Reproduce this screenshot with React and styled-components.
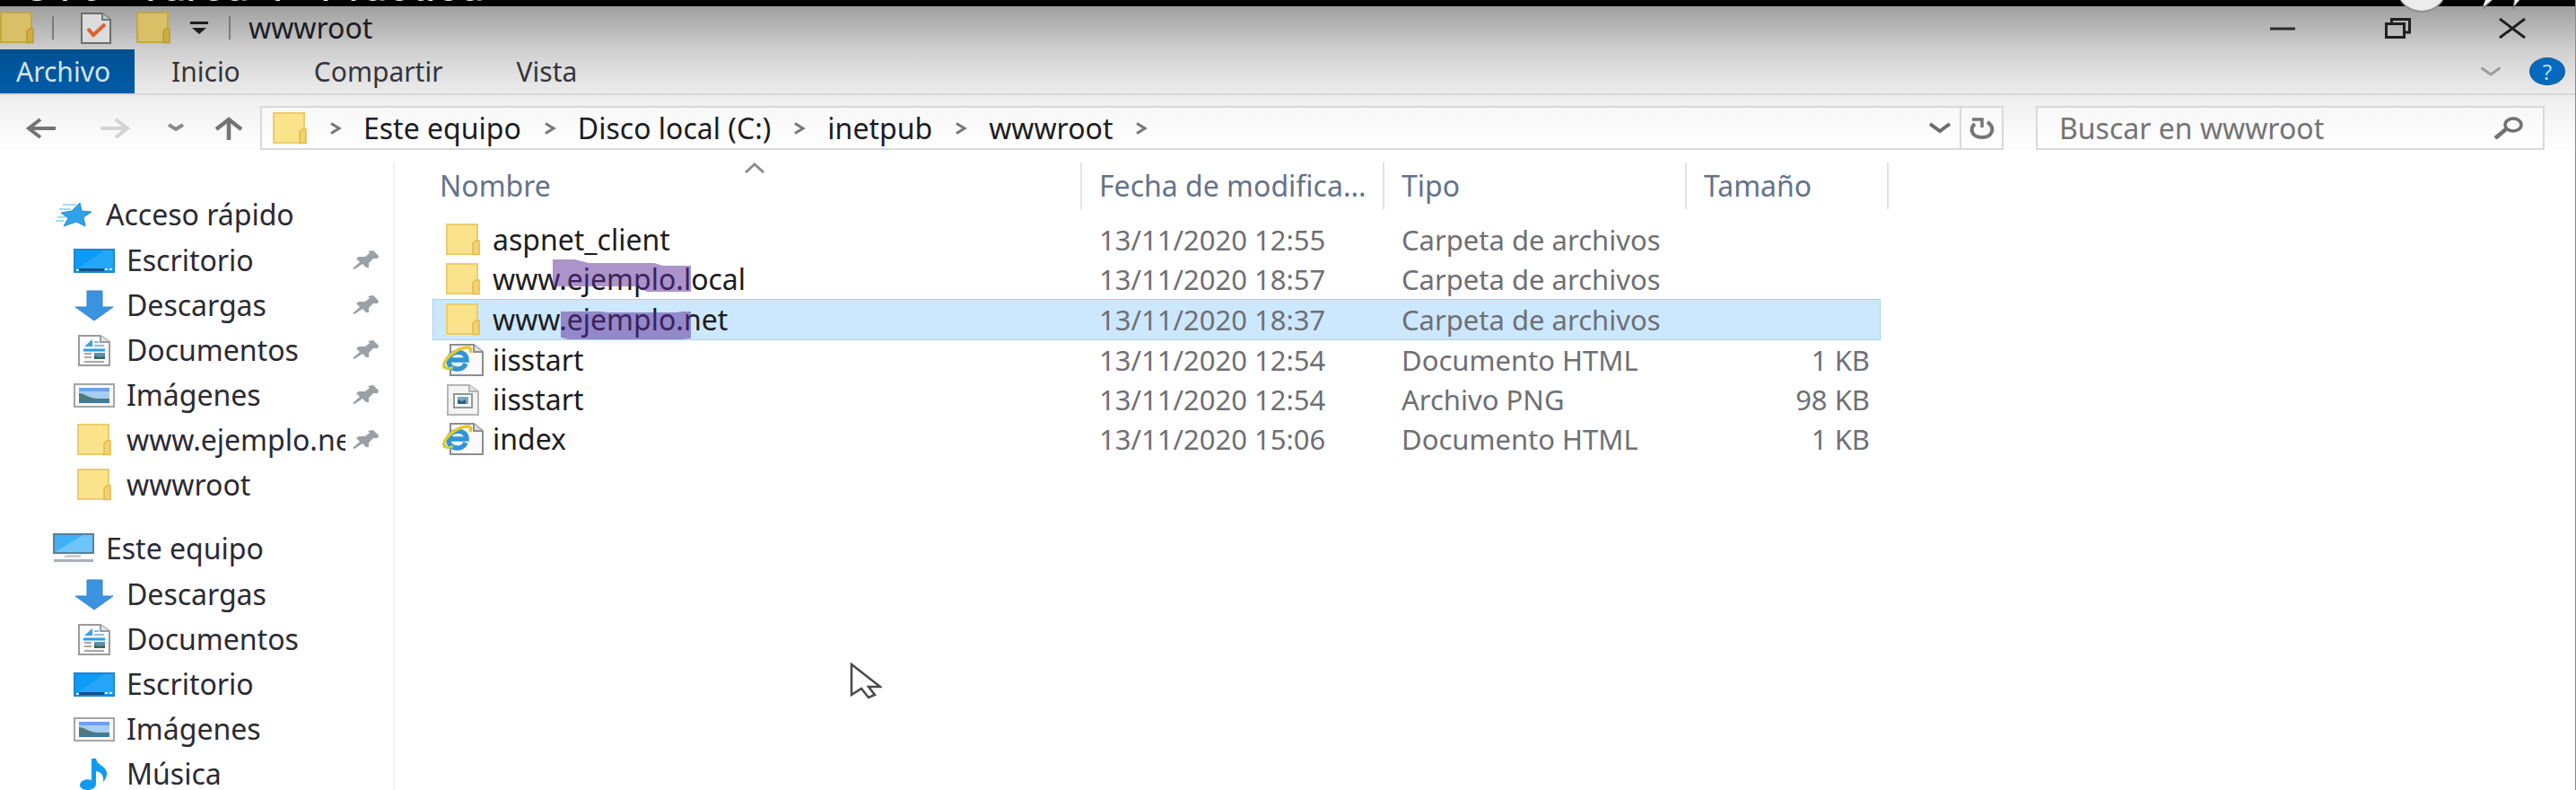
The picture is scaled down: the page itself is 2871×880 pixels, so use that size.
import React from "react";
import styled, { createGlobalStyle, css } from "styled-components";

const GlobalStyle = createGlobalStyle`
  * { box-sizing: border-box; }
  body {
    margin: 0;
    background: #fff;
    color: #1c1c24;
    font-family: "Noto Sans", "Open Sans", sans-serif;
    font-size: 32px;
    line-height: 44px;
  }
  button, input { font: inherit; color: inherit; }
  svg { display: block; flex: none; }
`;

/* ---------- layout ---------- */

const Page = styled.div`
  position: relative;
  display: flex;
  flex-direction: column;
  height: 100vh;
  overflow: hidden;
  border-right: 1px solid #8a8a8a;
`;

const VideoStrip = styled.div`
  display: flex;
  align-items: flex-end;
  flex: none;
  height: 7px;
  padding-left: 25px;
  overflow: hidden;
  background: #000;
`;

const VideoTitle = styled.span`
  color: #eceff0;
  font: 50px/46px Roboto, sans-serif;
  white-space: nowrap;
`;

const VideoControls = styled.svg`
  position: absolute;
  top: 0;
  right: 55px;
`;

const Chrome = styled.header`
  flex: none;
  background: linear-gradient(#9f9f9f 0, #b7b7b7 24px, #d0d0d0 50px, #e0e0e0 74px, #ececec 98px, #f2f2f2 112px, #fcfcfc 150px, #fff 173px);
`;

const TitleBar = styled.div`
  display: flex;
  align-items: center;
  height: 48px;
`;

const QuickAccess = styled.div`
  display: flex;
  align-items: center;
  height: 48px;
`;

const Separator = styled.span`
  width: 2px;
  height: 26px;
  background: #7b7b7b;
  margin-left: ${(p) => p.$before}px;
  margin-right: ${(p) => p.$after}px;
`;

const PlainButton = styled.button`
  display: flex;
  align-items: center;
  justify-content: center;
  padding: 0;
  border: 0;
  background: none;
`;

const ToolButton = styled(PlainButton)`
  margin-right: ${(p) => p.$after || 0}px;
`;

const WindowTitle = styled.h1`
  margin: 0;
  font-size: 32px;
  font-weight: 400;
  line-height: 44px;
`;

const WindowButtons = styled.div`
  display: flex;
  margin-left: auto;
  padding-right: 6px;
`;

const WindowButton = styled(PlainButton)`
  width: 128px;
  height: 42px;
`;

const Ribbon = styled.nav`
  display: flex;
  align-items: stretch;
  height: 51px;
  border-bottom: 2px solid #d7d7d7;
`;

const Tab = styled(PlainButton)`
  padding: 0 41px;
  font-size: 30px;
  color: #35343c;
  ${(p) =>
    p.$active &&
    css`
      padding: 0 27px 0 18px;
      color: #d5e4f2;
      background: linear-gradient(#00508f, #005cab);
    `}
`;

const RibbonEnd = styled.div`
  display: flex;
  align-items: center;
  gap: 31px;
  margin-left: auto;
  padding-right: 11px;
`;

const HelpButton = styled.button`
  width: 40px;
  height: 31px;
  padding: 0;
  border: 1px solid #1d5c93;
  border-radius: 50%;
  background: #0569c0;
  color: #b9dcf8;
  font-size: 24px;
  line-height: 28px;
  text-align: center;
`;

const NavBar = styled.div`
  display: flex;
  align-items: center;
  padding: 12px 34px 0 28px;
`;

const NavButtons = styled.div`
  display: flex;
  align-items: center;
  width: 262px;
`;

const Box = styled.div`
  display: flex;
  align-items: center;
  height: 49px;
  border: 2px solid #d9d9d9;
  background: rgba(255, 255, 255, 0.45);
`;

const AddressBar = styled(Box)`
  flex: 1;
  margin-right: 36px;
`;

const Crumbs = styled.div`
  display: flex;
  align-items: center;
  flex: 1;
  gap: 24px;
  padding-left: 12px;
`;

const Crumb = styled(PlainButton)`
  white-space: nowrap;
`;

const RefreshButton = styled(PlainButton)`
  align-self: stretch;
  width: 47px;
  margin-left: 9px;
  border-left: 2px solid #d9d9d9;
`;

const SearchBox = styled(Box)`
  width: 567px;
  padding: 0 22px 0 24px;
`;

const SearchInput = styled.input`
  flex: 1;
  min-width: 0;
  padding: 0;
  border: 0;
  outline: 0;
  background: none;
  &::placeholder { color: #747474; opacity: 1; }
`;

const Body = styled.div`
  display: flex;
  flex: 1;
  min-height: 0;
  padding-top: 14px;
`;

const Sidebar = styled.aside`
  flex: none;
  width: 440px;
  padding-top: 32px;
  border-right: 2px solid #f3f3f3;
`;

const Group = styled.ul`
  margin: 0 0 20px;
  padding: 0;
  list-style: none;
`;

const SideRow = styled.a`
  display: flex;
  align-items: center;
  height: ${(p) => (p.$head ? 52 : 50)}px;
  padding-left: ${(p) => (p.$head ? 58 : 81)}px;
  padding-right: 15px;
  color: #2a2a33;
  text-decoration: none;
`;

const SideIcon = styled.span`
  display: flex;
  justify-content: center;
  flex: none;
  width: 48px;
  margin-right: 12px;
`;

const SideLabel = styled.span`
  flex: 1;
  min-width: 0;
  margin-right: 8px;
  overflow: ${(p) => (p.$clip ? "hidden" : "visible")};
  white-space: nowrap;
`;

const Files = styled.main`
  flex: 1;
  padding-left: 42px;
`;

const FileTable = styled.table`
  width: 1623px;
  table-layout: fixed;
  border-collapse: separate;
  border-spacing: 0;
  tbody::before { content: ""; display: block; height: 12px; }
`;

const HeadCell = styled.th`
  position: relative;
  height: 52px;
  padding: 0 0 0 ${(p) => (p.$first ? 8 : 19)}px;
  border-right: 2px solid #e2e2e2;
  font-weight: 400;
  text-align: left;
`;

const HeadButton = styled(PlainButton)`
  white-space: nowrap;
  color: #65728a;
`;

const SortMark = styled.svg`
  position: absolute;
  top: 0;
  left: 348px;
`;

const Cell = styled.td`
  height: ${(p) => (p.$selected ? 46 : 44)}px;
  padding: 0 ${(p) => (p.$right ? 12 : 0)}px 0 19px;
  color: #6f6f74;
  font-size: 31px;
  text-align: ${(p) => (p.$right ? "right" : "left")};
  white-space: nowrap;
  ${(p) =>
    p.$selected &&
    css`
      background: #cce8ff;
      border: solid #a5d3f5;
      border-width: 1px 0;
      &:nth-child(4) { border-right-width: 1px; }
    `}
`;

const NameCell = styled(Cell)`
  padding: 0;
  color: #1c1c20;
  font-size: 32px;
  ${(p) => p.$selected && css`box-shadow: inset 1px 0 #a5d3f5;`}
`;

const NameRow = styled.div`
  display: flex;
  align-items: center;
`;

const FileIcon = styled.span`
  display: flex;
  justify-content: center;
  width: 48px;
  margin: 0 9px 0 10px;
`;

const FileName = styled.span`
  position: relative;
`;

const Marker = styled.svg`
  position: absolute;
  left: 67px;
  top: 0;
`;

const Pointer = styled.svg`
  position: absolute;
  left: 947px;
  top: 738px;
`;

/* ---------- icons ---------- */

const Folder = ({ dim }) => (
  <svg width="38" height="36" viewBox="0 0 38 36" aria-hidden="true">
    <rect x="1" y="1" width="34" height="33" fill={dim ? "#d9c067" : "#fbe38c"} stroke={dim ? "#c2a745" : "#eccd6a"} strokeWidth="2" />
    <path d="M30 34.500V22l3-3h4v15.500z" fill={dim ? "#cfae3f" : "#f3d36b"} stroke={dim ? "#b99a35" : "#dfbb4f"} strokeWidth="1.5" />
  </svg>
);

const Check = () => (
  <svg width="34" height="35" viewBox="0 0 34 35" aria-hidden="true">
    <path d="M1 1h23l9 7v26H1z" fill="#dcdcdc" stroke="#6d6d6d" strokeWidth="2" />
    <path d="M24 1v7h9" fill="#bcc" stroke="#6d7878" strokeWidth="2" />
    <path d="M8 18l6 7 13-12" fill="none" stroke="#dd6330" strokeWidth="4" />
  </svg>
);

const Chevron = ({ w = 20, h = 10, dir = "down", color = "#757575", sw = 3 }) => {
  const a = sw;
  const d = {
    down: `M${a / 2} ${a / 2}L${w / 2} ${h - a}L${w - a / 2} ${a / 2}`,
    right: `M${a} ${a / 2}L${w - a} ${h / 2}L${a} ${h - a / 2}`,
  }[dir];
  return (
    <svg width={w} height={h} viewBox={`0 0 ${w} ${h}`} aria-hidden="true">
      <path d={d} fill="none" stroke={color} strokeWidth={sw} />
    </svg>
  );
};

const CrumbArrow = () => <Chevron w={15} h={14} dir="right" color="#777" sw={3} />;

const Arrow = ({ dir, color }) => {
  const d = {
    left: "M34 12H4M17 2L4 12l13 10",
    right: "M0 12h30M17 2l13 10-13 10",
  }[dir];
  return (
    <svg width="34" height="24" viewBox="0 0 34 24" aria-hidden="true">
      <path d={d} fill="none" stroke={color} strokeWidth="4" />
    </svg>
  );
};

const UpArrow = () => (
  <svg width="34" height="26" viewBox="0 0 34 26" aria-hidden="true">
    <path d="M17 26V4M3 14L17 3l14 11" fill="none" stroke="#747474" strokeWidth="4.5" />
  </svg>
);

const Star = () => (
  <svg width="42" height="28" viewBox="0 0 42 28" aria-hidden="true">
    <path d="M9 3h15M5 8h13M3 17h9M1 21h9" stroke="#a5d8f5" strokeWidth="2" />
    <path d="M28 1l2 9 11 1-9 6 2 10-10-5-14 5 5-9-8-6 12-2z" fill="#2fa3ea" stroke="#2489cc" />
  </svg>
);

const Desktop = () => (
  <svg width="46" height="27" viewBox="0 0 46 27" aria-hidden="true">
    <rect x="1" y="1" width="44" height="25" fill="#0c9bf5" stroke="#1f86d0" strokeWidth="2" />
    <path d="M2 24L34 2h10v22z" fill="#26a6f8" />
    <path d="M6 23.500h28" stroke="#125083" strokeWidth="3" />
    <path d="M3 24h3M35 23h3M40 23h3" stroke="#d4efff" strokeWidth="2" />
  </svg>
);

const Download = () => (
  <svg width="44" height="35" viewBox="0 0 44 35" aria-hidden="true">
    <path d="M14 1h17v18h12L22 34 1 19h13z" fill="#3b93df" stroke="#3384cf" />
  </svg>
);

const Document = () => (
  <svg width="36" height="35" viewBox="0 0 36 35" aria-hidden="true">
    <path d="M1 1h24l10 7v26H1z" fill="#fbfbfb" stroke="#9c9c9c" strokeWidth="2" />
    <path d="M25 1v7h10" fill="#e7e7e7" stroke="#9c9c9c" strokeWidth="2" />
    <path d="M7 13l9-8v8z" fill="#3c9fe0" />
    <path d="M18 8h5M18 12h11" stroke="#8bbfe4" strokeWidth="2" />
    <path d="M6 17h24" stroke="#2b9be6" strokeWidth="3" />
    <path d="M7 21h8M7 25h8M7 30h22" stroke="#a7a7a7" strokeWidth="2" />
    <rect x="18" y="20" width="12" height="7" fill="#5b8fb0" />
    <path d="M18 27v-4l6 2 6-1v3z" fill="#356a58" />
  </svg>
);

const Picture = () => (
  <svg width="46" height="27" viewBox="0 0 46 27" aria-hidden="true">
    <rect x="1" y="1" width="44" height="25" fill="#fafafa" stroke="#a5a5a5" strokeWidth="2" />
    <rect x="6" y="5" width="34" height="17" fill="#a7cdf5" />
    <path d="M6 5h34v4H6z" fill="#6ba2ea" />
    <path d="M6 11c6 0 10 5 20 6h14v5H6z" fill="#4d7c78" />
    <path d="M6 19h34v3H6z" fill="#3f79a8" />
  </svg>
);

const Computer = () => (
  <svg width="46" height="34" viewBox="0 0 46 34" aria-hidden="true">
    <rect x="1" y="1" width="44" height="21" fill="#3fb0f7" stroke="#5d7f98" strokeWidth="2" />
    <path d="M2 21L34 2h10v19z" fill="#6cc5fb" />
    <path d="M15 24h16v3H11z" fill="#c9ced2" />
    <path d="M1 29h44v3H1z" fill="#a9afb6" />
  </svg>
);

const Music = () => (
  <svg width="34" height="35" viewBox="0 0 34 35" aria-hidden="true">
    <path d="M14 0h5c1 8 13 8 12 18-1 4-2 6-4 8 1-8-3-11-8-12v14c0 9-17 9-18 2 0-6 8-8 13-6z" fill="#109bf2" />
  </svg>
);

const Pin = () => (
  <svg width="30" height="22" viewBox="0 0 30 22" aria-hidden="true">
    <path d="M17 1l6-1 6 6-1 3-5 0-5 5 0 5-3 0-4-4-9 6-2-1 8-7-4-4 3-2 7 0 5-4z" fill="#9aa0a4" />
  </svg>
);

const HtmlFile = () => (
  <svg width="46" height="36" viewBox="0 0 46 36" aria-hidden="true">
    <path d="M9 1h26l10 8v26H9z" fill="#fbfbfb" stroke="#8d8d8d" strokeWidth="2" />
    <path d="M35 1v8h10" fill="#ddd" stroke="#8d8d8d" strokeWidth="2" />
    <path d="M7 18h20c0-11-17-12-20-1-2 12 15 15 19 5" fill="none" stroke="#2f95d8" strokeWidth="5.5" />
    <path d="M3 27C-3 21 14 4 29 4c3 0 3 3 2 6" fill="none" stroke="#e6c92f" strokeWidth="3.5" />
    <path d="M3 24c0 5 5 4 9 2" fill="none" stroke="#c6cf3a" strokeWidth="3" />
  </svg>
);

const PngFile = () => (
  <svg width="36" height="35" viewBox="0 0 36 35" aria-hidden="true">
    <path d="M1 1h24l10 7v26H1z" fill="#f4f4f4" stroke="#b5b5b5" strokeWidth="2" />
    <path d="M25 1v7h10" fill="#e2e2e2" stroke="#b5b5b5" strokeWidth="2" />
    <rect x="8" y="11" width="20" height="15" fill="#fff" stroke="#8f979e" strokeWidth="2" />
    <path d="M12 14h12v8H12z" fill="#79a6c8" />
    <path d="M12 22v-5l5 2 4-2v5z" fill="#2b6184" />
  </svg>
);

const fileIcons = { folder: Folder, html: HtmlFile, png: PngFile };

/* ---------- data ---------- */

const quick = [
  ["Escritorio", Desktop, true],
  ["Descargas", Download, true],
  ["Documentos", Document, true],
  ["Imágenes", Picture, true],
  ["www.ejemplo.net", Folder, true],
  ["wwwroot", Folder, false],
];

const computer = [
  ["Descargas", Download],
  ["Documentos", Document],
  ["Escritorio", Desktop],
  ["Imágenes", Picture],
  ["Música", Music],
];

const files = [
  { name: "aspnet_client", icon: "folder", date: "13/11/2020 12:55", type: "Carpeta de archivos", size: "" },
  { name: "www.ejemplo.local", icon: "folder", date: "13/11/2020 18:57", type: "Carpeta de archivos", size: "", mark: "M0 0h25l15 4h73l10 3h31v29h-49l-12-6H0z" },
  { name: "www.ejemplo.net", icon: "folder", date: "13/11/2020 18:37", type: "Carpeta de archivos", size: "", selected: true, mark: "M9 13h44l8 1h76l8-1h9v30l-10 1H18l-9-2z" },
  { name: "iisstart", icon: "html", date: "13/11/2020 12:54", type: "Documento HTML", size: "1 KB" },
  { name: "iisstart", icon: "png", date: "13/11/2020 12:54", type: "Archivo PNG", size: "98 KB" },
  { name: "index", icon: "html", date: "13/11/2020 15:06", type: "Documento HTML", size: "1 KB" },
];

const crumbs = ["Este equipo", "Disco local (C:)", "inetpub", "wwwroot"];

function SideGroup({ title, Icon, items }) {
  return (
    <Group>
      <li>
        <SideRow href="#" $head>
          <SideIcon><Icon /></SideIcon>
          <SideLabel>{title}</SideLabel>
        </SideRow>
      </li>
      {items.map(([label, ItemIcon, pinned]) => (
        <li key={label}>
          <SideRow href="#">
            <SideIcon><ItemIcon /></SideIcon>
            <SideLabel $clip={pinned}>{label}</SideLabel>
            {pinned && <Pin />}
          </SideRow>
        </li>
      ))}
    </Group>
  );
}

export default function App() {
  return (
    <Page>
      <GlobalStyle />
      <VideoStrip>
        <VideoTitle>UT6 - Tarea 4 - Práctica</VideoTitle>
      </VideoStrip>

      <Chrome>
        <TitleBar>
          <QuickAccess>
            <Folder dim />
            <Separator $before={20} $after={30} />
            <ToolButton aria-label="Propiedades" $after={28}><Check /></ToolButton>
            <ToolButton aria-label="Nueva carpeta" $after={21}><Folder dim /></ToolButton>
            <ToolButton aria-label="Personalizar">
              <svg width="22" height="14" viewBox="0 0 22 14" aria-hidden="true">
                <path d="M1 0h20v3H1zM3 7h16l-8 7z" fill="#1c1c1c" />
              </svg>
            </ToolButton>
            <Separator $before={22} $after={20} />
          </QuickAccess>
          <WindowTitle>wwwroot</WindowTitle>
          <WindowButtons>
            <WindowButton aria-label="Minimizar">
              <svg width="28" height="23" viewBox="0 0 28 23" aria-hidden="true">
                <path d="M0 12h28" stroke="#2b2b2b" strokeWidth="3" />
              </svg>
            </WindowButton>
            <WindowButton aria-label="Restaurar">
              <svg width="29" height="23" viewBox="0 0 29 23" aria-hidden="true">
                <path d="M1.500 6.500h20v15h-20zM7.500 6V1.500h20v14.500H22" fill="none" stroke="#1f1f1f" strokeWidth="3" />
              </svg>
            </WindowButton>
            <WindowButton aria-label="Cerrar">
              <svg width="30" height="23" viewBox="0 0 30 23" aria-hidden="true">
                <path d="M1 1l28 21M29 1L1 22" stroke="#1f1f1f" strokeWidth="3" />
              </svg>
            </WindowButton>
          </WindowButtons>
        </TitleBar>

        <Ribbon>
          <Tab $active>Archivo</Tab>
          <Tab>Inicio</Tab>
          <Tab>Compartir</Tab>
          <Tab>Vista</Tab>
          <RibbonEnd>
            <PlainButton aria-label="Expandir la cinta">
              <Chevron w={24} h={12} color="#9c9c9c" />
            </PlainButton>
            <HelpButton>?</HelpButton>
          </RibbonEnd>
        </Ribbon>

        <NavBar>
          <NavButtons>
            <ToolButton aria-label="Atrás" $after={50}><Arrow dir="left" color="#747474" /></ToolButton>
            <ToolButton aria-label="Adelante" $after={40}><Arrow dir="right" color="#d3d3d3" /></ToolButton>
            <ToolButton aria-label="Ubicaciones recientes" $after={32}><Chevron w={20} h={11} color="#8a8a8a" sw={4} /></ToolButton>
            <ToolButton aria-label="Subir"><UpArrow /></ToolButton>
          </NavButtons>
          <AddressBar>
            <Crumbs>
              <Folder />
              <CrumbArrow />
              {crumbs.map((c) => (
                <React.Fragment key={c}>
                  <Crumb>{c}</Crumb>
                  <CrumbArrow />
                </React.Fragment>
              ))}
            </Crumbs>
            <PlainButton aria-label="Ubicaciones anteriores">
              <Chevron w={26} h={14} color="#6c6c6c" sw={4} />
            </PlainButton>
            <RefreshButton aria-label="Actualizar">
              <svg width="28" height="24" viewBox="0 0 28 24" aria-hidden="true">
                <path d="M6 7c-6 5-4 15 8 15s15-11 6-17" fill="none" stroke="#757575" strokeWidth="4" />
                <path d="M3 2h11v9" fill="none" stroke="#757575" strokeWidth="3.500" />
              </svg>
            </RefreshButton>
          </AddressBar>
          <SearchBox>
            <SearchInput type="text" aria-label="Buscar" placeholder="Buscar en wwwroot" />
            <svg width="33" height="25" viewBox="0 0 33 25" aria-hidden="true">
              <ellipse cx="22" cy="9" rx="9" ry="7" fill="none" stroke="#717171" strokeWidth="3.500" />
              <path d="M15 13L2 24" stroke="#717171" strokeWidth="4.500" />
            </svg>
          </SearchBox>
        </NavBar>
      </Chrome>

      <Body>
        <Sidebar>
          <SideGroup title="Acceso rápido" Icon={Star} items={quick} />
          <SideGroup title="Este equipo" Icon={Computer} items={computer} />
        </Sidebar>
        <Files>
          <FileTable>
            <colgroup>
              <col width="724" />
              <col width="337" />
              <col width="337" />
              <col width="216" />
              <col width="9" />
            </colgroup>
            <thead>
              <tr>
                <HeadCell $first>
                  <HeadButton>Nombre</HeadButton>
                  <SortMark width="22" height="12" viewBox="0 0 22 12" aria-hidden="true">
                    <path d="M1 11L11 2l10 9" fill="none" stroke="#8c8c8c" strokeWidth="3" />
                  </SortMark>
                </HeadCell>
                <HeadCell><HeadButton>Fecha de modifica...</HeadButton></HeadCell>
                <HeadCell><HeadButton>Tipo</HeadButton></HeadCell>
                <HeadCell colSpan={2}><HeadButton>Tamaño</HeadButton></HeadCell>
              </tr>
            </thead>
            <tbody>
              {files.map((f) => {
                const Icon = fileIcons[f.icon];
                return (
                  <tr key={f.name + f.icon}>
                    <NameCell $selected={f.selected}>
                      <NameRow>
                        <FileIcon><Icon /></FileIcon>
                        <FileName>
                          {f.name}
                          {f.mark && (
                            <Marker width="156" height="44" viewBox="0 0 156 44" aria-hidden="true">
                              <path d={f.mark} fill="#5a2896" fillOpacity="0.5" />
                            </Marker>
                          )}
                        </FileName>
                      </NameRow>
                    </NameCell>
                    <Cell $selected={f.selected}>{f.date}</Cell>
                    <Cell $selected={f.selected}>{f.type}</Cell>
                    <Cell $selected={f.selected} $right>{f.size}</Cell>
                    <td />
                  </tr>
                );
              })}
            </tbody>
          </FileTable>
        </Files>
      </Body>

      <VideoControls width="143" height="14" viewBox="0 0 143 14" aria-hidden="true">
        <circle cx="27" cy="-14" r="28" fill="#8d8d8d" />
        <circle cx="27" cy="-16" r="28" fill="#ececec" />
        <path d="M98 0h8l-11 11zM130 0h6l-8 11z" fill="#777" />
        <path d="M98 0h7l-10 8zM131 0h5l-6 6z" fill="#f2f2f2" />
      </VideoControls>

      <Pointer width="36" height="42" viewBox="0 0 36 42" aria-hidden="true">
        <path d="M2 2v34l11-7 8 10 7-3-7-9h13z" fill="#fff" stroke="#4a4a4a" strokeWidth="2.500" />
      </Pointer>
    </Page>
  );
}
